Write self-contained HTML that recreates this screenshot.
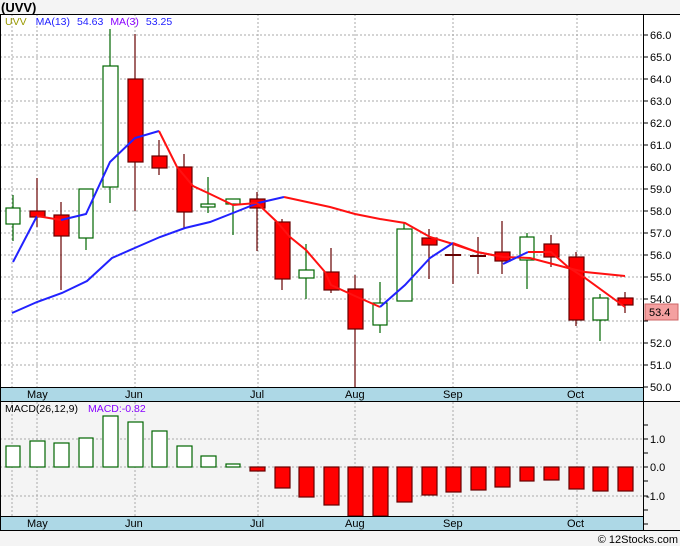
<!DOCTYPE html>
<html><head><style>
html,body{margin:0;padding:0;background:#f4f4f4;}
svg{display:block;font-family:"Liberation Sans",sans-serif;}
</style></head><body>
<svg width="680" height="546" viewBox="0 0 680 546" xmlns="http://www.w3.org/2000/svg">
<rect x="0" y="0" width="680" height="546" fill="#f4f4f4"/>
<text x="1" y="12" font-size="13" font-weight="bold" fill="#000">(UVV)</text>
<!-- main panel -->
<rect x="0" y="14" width="680" height="387" fill="#fff"/>
<rect x="0" y="387" width="643" height="14" fill="#add8e6"/>
<g stroke="#aaa" stroke-width="1" stroke-dasharray="2,2">
<line x1="0" x2="643" y1="35" y2="35"/><line x1="0" x2="643" y1="57" y2="57"/><line x1="0" x2="643" y1="79" y2="79"/><line x1="0" x2="643" y1="101" y2="101"/><line x1="0" x2="643" y1="123" y2="123"/><line x1="0" x2="643" y1="145" y2="145"/><line x1="0" x2="643" y1="167" y2="167"/><line x1="0" x2="643" y1="189" y2="189"/><line x1="0" x2="643" y1="211" y2="211"/><line x1="0" x2="643" y1="233" y2="233"/><line x1="0" x2="643" y1="255" y2="255"/><line x1="0" x2="643" y1="277" y2="277"/><line x1="0" x2="643" y1="299" y2="299"/><line x1="0" x2="643" y1="321" y2="321"/><line x1="0" x2="643" y1="343" y2="343"/><line x1="0" x2="643" y1="365" y2="365"/>
<line x1="12" x2="12" y1="14" y2="387"/><line x1="37" x2="37" y1="14" y2="387"/><line x1="135" x2="135" y1="14" y2="387"/><line x1="258" x2="258" y1="14" y2="387"/><line x1="355" x2="355" y1="14" y2="387"/><line x1="453" x2="453" y1="14" y2="387"/><line x1="577" x2="577" y1="14" y2="387"/>
<line x1="0" x2="643" y1="439" y2="439"/><line x1="0" x2="643" y1="467" y2="467"/><line x1="0" x2="643" y1="496" y2="496"/>
<line x1="12" x2="12" y1="402" y2="516"/><line x1="37" x2="37" y1="402" y2="516"/><line x1="135" x2="135" y1="402" y2="516"/><line x1="258" x2="258" y1="402" y2="516"/><line x1="355" x2="355" y1="402" y2="516"/><line x1="453" x2="453" y1="402" y2="516"/><line x1="577" x2="577" y1="402" y2="516"/>
</g>
<g font-size="11" fill="#000">
<text x="27" y="398">May</text><text x="125" y="398">Jun</text><text x="250" y="398">Jul</text><text x="345" y="398">Aug</text><text x="443" y="398">Sep</text><text x="567" y="398">Oct</text>
</g>
<!-- candles -->
<g stroke-width="1.2">
<g stroke="#060">
<line x1="13" x2="13" y1="195" y2="241"/><rect x="6" y="208" width="14" height="16" fill="#fff"/>
<line x1="86" x2="86" y1="189" y2="250"/><rect x="79" y="189" width="14" height="49" fill="#fff"/>
<line x1="110" x2="110" y1="29" y2="203"/><rect x="103" y="66" width="15" height="121" fill="#fff"/>
<line x1="208" x2="208" y1="177" y2="213"/><rect x="201" y="204" width="14" height="3" fill="#fff"/>
<line x1="233" x2="233" y1="199" y2="235"/><rect x="226" y="199" width="14" height="5" fill="#fff"/>
<line x1="306" x2="306" y1="244" y2="299"/><rect x="299" y="270" width="15" height="8" fill="#fff"/>
<line x1="380" x2="380" y1="282" y2="333"/><rect x="373" y="303" width="14" height="22" fill="#fff"/>
<line x1="404" x2="404" y1="223" y2="301"/><rect x="397" y="229" width="15" height="72" fill="#fff"/>
<line x1="527" x2="527" y1="233" y2="289"/><rect x="520" y="237" width="14" height="23" fill="#fff"/>
<line x1="600" x2="600" y1="294" y2="341"/><rect x="593" y="298" width="15" height="22" fill="#fff"/>
</g>
<g stroke="#600">
<line x1="37" x2="37" y1="178" y2="227"/><rect x="30" y="211" width="15" height="6" fill="#f00"/>
<line x1="61" x2="61" y1="202" y2="290"/><rect x="54" y="215" width="15" height="21" fill="#f00"/>
<line x1="135" x2="135" y1="34" y2="211"/><rect x="128" y="79" width="15" height="83" fill="#f00"/>
<line x1="159" x2="159" y1="140" y2="175"/><rect x="152" y="156" width="15" height="12" fill="#f00"/>
<line x1="184" x2="184" y1="154" y2="228"/><rect x="177" y="167" width="15" height="45" fill="#f00"/>
<line x1="257" x2="257" y1="192" y2="251"/><rect x="250" y="199" width="15" height="9" fill="#f00"/>
<line x1="282" x2="282" y1="219" y2="290"/><rect x="275" y="222" width="15" height="57" fill="#f00"/>
<line x1="331" x2="331" y1="248" y2="293"/><rect x="324" y="272" width="15" height="18" fill="#f00"/>
<line x1="355" x2="355" y1="275" y2="387"/><rect x="348" y="289" width="15" height="40" fill="#f00"/>
<line x1="429" x2="429" y1="229" y2="279"/><rect x="422" y="238" width="15" height="7" fill="#f00"/>
<line x1="453" x2="453" y1="244" y2="284"/><line x1="445" x2="461" y1="255" y2="255" stroke-width="2"/>
<line x1="478" x2="478" y1="237" y2="274"/><line x1="470" x2="486" y1="256" y2="256" stroke-width="2"/>
<line x1="502" x2="502" y1="221" y2="274"/><rect x="495" y="252" width="15" height="9" fill="#f00"/>
<line x1="551" x2="551" y1="235" y2="267"/><rect x="544" y="244" width="15" height="13" fill="#f00"/>
<line x1="576" x2="576" y1="252" y2="326"/><rect x="569" y="257" width="15" height="63" fill="#f00"/>
<line x1="625" x2="625" y1="292" y2="313"/><rect x="618" y="298" width="15" height="7" fill="#f00"/>
</g>
</g>
<!-- MA13 -->
<polyline fill="none" stroke="#22f" stroke-width="2" points="12,313 37,302 62,293 87,281 112,258 137,247 160,237 185,228 210,222 233,213 258,203 284,197"/>
<polyline fill="none" stroke="#f11" stroke-width="2" points="284,197 330,207 355,214 380,219 405,223 430,237 453,244 477,252 503,257 530,258 568,268 585,272 625,276"/>
<!-- MA3 -->
<polyline fill="none" stroke="#22f" stroke-width="2" points="13,262 37,216"/>
<polyline fill="none" stroke="#f11" stroke-width="2" points="37,216 61,220"/>
<polyline fill="none" stroke="#22f" stroke-width="2" points="61,220 86,214 110,162 135,138 159,131"/>
<polyline fill="none" stroke="#f11" stroke-width="2" points="159,131 177,167 193,186 208,193 233,205 257,203"/>
<polyline fill="none" stroke="#f11" stroke-width="2" points="257,203 277,222 290,237 306,250 325,272 331,285 355,296 380,307"/>
<polyline fill="none" stroke="#22f" stroke-width="2" points="380,307 405,285 430,258 453,243"/>
<polyline fill="none" stroke="#f11" stroke-width="2" points="453,243 477,252 503,257"/>
<polyline fill="none" stroke="#22f" stroke-width="2" points="503,264 528,252"/>
<polyline fill="none" stroke="#f11" stroke-width="2" points="528,252 551,252 568,267 585,278 625,307"/>
<!-- legend -->
<text x="5" y="25" font-size="10.5"><tspan fill="#990">UVV</tspan><tspan fill="#22f" dx="9">MA(13)</tspan><tspan fill="#22f" dx="7">54.63</tspan><tspan fill="#80f" dx="7">MA(3)</tspan><tspan fill="#22f" dx="7">53.25</tspan></text>
<!-- MACD -->
<rect x="0" y="402" width="643" height="114" fill="#fff" fill-opacity="0"/>
<rect x="0" y="516" width="643" height="14" fill="#add8e6"/>
<g font-size="11" fill="#000">
<text x="27" y="527">May</text><text x="125" y="527">Jun</text><text x="250" y="527">Jul</text><text x="345" y="527">Aug</text><text x="443" y="527">Sep</text><text x="567" y="527">Oct</text>
</g>
<g stroke="#060" stroke-width="1.2" fill="#fff">
<rect x="6" y="446" width="14" height="21"/><rect x="30" y="441" width="15" height="26"/><rect x="54" y="443" width="15" height="24"/><rect x="79" y="438" width="14" height="29"/><rect x="103" y="416" width="15" height="51"/><rect x="128" y="422" width="15" height="45"/><rect x="152" y="431" width="15" height="36"/><rect x="177" y="446" width="15" height="21"/><rect x="201" y="456" width="15" height="11"/><rect x="226" y="464" width="14" height="3"/>
</g>
<g stroke="#600" stroke-width="1.2" fill="#f00">
<rect x="250" y="467" width="15" height="4"/><rect x="275" y="467" width="15" height="21"/><rect x="299" y="467" width="15" height="30"/><rect x="324" y="467" width="15" height="38"/><rect x="348" y="467" width="15" height="49"/><rect x="373" y="467" width="15" height="49"/><rect x="397" y="467" width="15" height="35"/><rect x="422" y="467" width="15" height="28"/><rect x="446" y="467" width="15" height="25"/><rect x="471" y="467" width="15" height="23"/><rect x="495" y="467" width="15" height="20"/><rect x="520" y="467" width="14" height="14"/><rect x="544" y="467" width="15" height="13"/><rect x="569" y="467" width="15" height="22"/><rect x="593" y="467" width="15" height="24"/><rect x="618" y="467" width="15" height="24"/>
</g>
<text x="5" y="412" font-size="10.5"><tspan fill="#000">MACD(26,12,9)</tspan><tspan fill="#80f" dx="10">MACD:-0.82</tspan></text>
<!-- borders -->
<g stroke="#000" stroke-width="1" fill="none">
<line x1="0" x2="680" y1="14.5" y2="14.5"/>
<line x1="0.5" x2="0.5" y1="14" y2="530"/>
<line x1="643.5" x2="643.5" y1="14" y2="530"/>
<line x1="0" x2="680" y1="401.5" y2="401.5"/>
<line x1="0" x2="643" y1="387.5" y2="387.5"/>
<line x1="0" x2="643" y1="516.5" y2="516.5"/>
<line x1="0" x2="680" y1="530.5" y2="530.5"/>
</g>
<!-- axis -->
<g stroke="#000" stroke-width="1">
<line x1="643" x2="648" y1="35" y2="35"/><line x1="643" x2="648" y1="57" y2="57"/><line x1="643" x2="648" y1="79" y2="79"/><line x1="643" x2="648" y1="101" y2="101"/><line x1="643" x2="648" y1="123" y2="123"/><line x1="643" x2="648" y1="145" y2="145"/><line x1="643" x2="648" y1="167" y2="167"/><line x1="643" x2="648" y1="189" y2="189"/><line x1="643" x2="648" y1="211" y2="211"/><line x1="643" x2="648" y1="233" y2="233"/><line x1="643" x2="648" y1="255" y2="255"/><line x1="643" x2="648" y1="277" y2="277"/><line x1="643" x2="648" y1="299" y2="299"/><line x1="643" x2="648" y1="321" y2="321"/><line x1="643" x2="648" y1="343" y2="343"/><line x1="643" x2="648" y1="365" y2="365"/><line x1="643" x2="648" y1="387" y2="387"/>
<line x1="643" x2="648" y1="425" y2="425"/><line x1="643" x2="648" y1="439" y2="439"/><line x1="643" x2="648" y1="453" y2="453"/><line x1="643" x2="648" y1="467" y2="467"/><line x1="643" x2="648" y1="481" y2="481"/><line x1="643" x2="648" y1="496" y2="496"/><line x1="643" x2="648" y1="510" y2="510"/><line x1="643" x2="648" y1="524" y2="524"/>
</g>
<g font-size="11" fill="#000">
<text x="650" y="39">66.0</text><text x="650" y="61">65.0</text><text x="650" y="83">64.0</text><text x="650" y="105">63.0</text><text x="650" y="127">62.0</text><text x="650" y="149">61.0</text><text x="650" y="171">60.0</text><text x="650" y="193">59.0</text><text x="650" y="215">58.0</text><text x="650" y="237">57.0</text><text x="650" y="259">56.0</text><text x="650" y="281">55.0</text><text x="650" y="303">54.0</text><text x="650" y="347">52.0</text><text x="650" y="369">51.0</text><text x="650" y="391">50.0</text>
<text x="650" y="443">1.0</text><text x="650" y="471">0.0</text><text x="646" y="500">-1.0</text>
</g>
<rect x="645" y="304" width="33" height="16" fill="#f4a0a0" stroke="#c66" stroke-width="1"/>
<text x="649" y="316" font-size="11" fill="#000">53.4</text>
<text x="678" y="543" font-size="11" fill="#000" text-anchor="end">© 12Stocks.com</text>
</svg>
</body></html>
